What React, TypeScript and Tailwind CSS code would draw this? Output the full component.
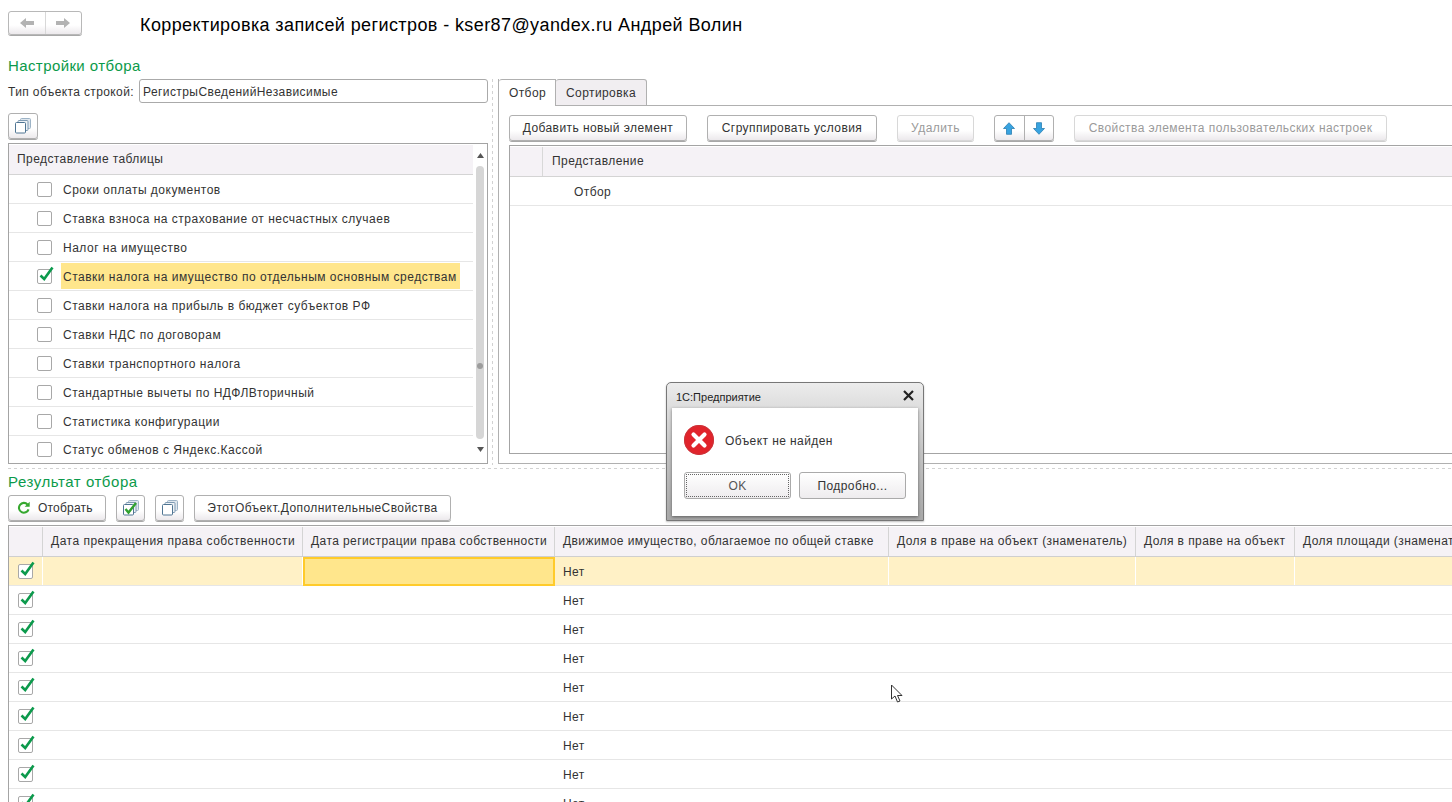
const listRows = [
  "Сроки оплаты документов",
  "Ставка взноса на страхование от несчастных случаев",
  "Налог на имущество",
  "Ставки налога на имущество по отдельным основным средствам",
  "Ставки налога на прибыль в бюджет субъектов РФ",
  "Ставки НДС по договорам",
  "Ставки транспортного налога",
  "Стандартные вычеты по НДФЛВторичный",
  "Статистика конфигурации",
  "Статус обменов с Яндекс.Кассой",
];

const columns = [
  { title: "", width: "w-[34px]" },
  { title: "Дата прекращения права собственности", width: "w-[260px]" },
  { title: "Дата регистрации права собственности", width: "w-[252px]" },
  { title: "Движимое имущество, облагаемое по общей ставке", width: "w-[334px]" },
  { title: "Доля в праве на объект (знаменатель)", width: "w-[247px]" },
  { title: "Доля в праве на объект", width: "w-[159px]" },
  { title: "Доля площади (знаменатель)", width: "w-[200px]" },
];

const dashedH =
  "h-px bg-[repeating-linear-gradient(90deg,#d2d2d2_0,#d2d2d2_3px,transparent_3px,transparent_6px)]";
const buttonBase =
  "flex items-center justify-center rounded-[3px] border bg-gradient-to-b from-white from-60% to-[#ece9ec] shadow-[0_1px_0_#a8a8a8]";
const button = `${buttonBase} border-[#b0b0b0] text-[#333]`;
const buttonOff = `${buttonBase} border-[#d8d8d8] text-[#9a9a9a] shadow-[0_1px_0_#cfcfcf]`;

function Checkbox({ checked }: { checked?: boolean }) {
  return (
    <div className="relative h-[15px] w-[15px] rounded-[2px] border border-[#a8a8a8] bg-white">
      {checked && (
        <svg className="absolute -top-[5px] left-0 h-[18px] w-[17px]" viewBox="0 0 17 18" fill="none">
          <path d="M2.5 10.5 L6.2 14 L14.5 2.5" stroke="#0c9a4c" strokeWidth="2.6" />
        </svg>
      )}
    </div>
  );
}

function StackIcon({ check }: { check?: boolean }) {
  return (
    <svg width="16" height="16" viewBox="0 0 16 16" fill="none">
      <rect x="5.5" y="0.5" width="10" height="10" rx="1" fill="#dfe7ee" stroke="#9db3c6" />
      <rect x="3" y="2.5" width="10" height="10" rx="1" fill="#eef2f6" stroke="#7f9bb3" />
      <rect x="0.5" y="4.5" width="10" height="10.5" rx="1" fill="#fff" stroke="#4f7593" />
      {check && <path d="M2.5 9 L5.5 12.5 L13 3" stroke="#2fa12f" strokeWidth="2.4" />}
    </svg>
  );
}

function BlueArrow({ down }: { down?: boolean }) {
  return (
    <svg width="12" height="13" viewBox="0 0 12 13" className={down ? "rotate-180" : ""}>
      <path d="M6 0.7 L11.5 6.5 H8.5 V12.3 H3.5 V6.5 H0.5 Z" fill="#38a3e0" stroke="#2a7fb2" strokeWidth="0.8" />
    </svg>
  );
}

function GreyArrow({ right }: { right?: boolean }) {
  return (
    <svg width="14" height="10" viewBox="0 0 14 10" className={right ? "rotate-180" : ""}>
      <path d="M0 5 L6 0 V3 H14 V7 H6 V10 Z" fill="#b3b3b3" />
    </svg>
  );
}

function ErrorDialog() {
  return (
    <div className="absolute left-[666px] top-[382px] flex h-[139px] w-[258px] flex-col rounded-t-[5px] border border-[#777] bg-gradient-to-b from-[#ececec] via-[#c4c4c4] to-[#a8a8a8] px-[5px] pb-[4px] shadow-[0_1px_2px_rgba(0,0,0,0.25)]">
      <div className="flex h-[25px] items-center justify-between pl-[4px] pr-[4px] pt-[3px] text-[11px] tracking-[0px] text-[#222]">
        <span>1С:Предприятие</span>
        <svg className="-mt-[3px]" width="11" height="11" viewBox="0 0 11 11">
          <path d="M1 1 L10 10 M10 1 L1 10" stroke="#222" strokeWidth="2.2" />
        </svg>
      </div>
      <div className="flex-1 bg-white pl-[12px] pr-[12px] pt-[17px] shadow-[0_1px_3px_rgba(0,0,0,0.45)]">
        <div className="flex h-[30px] items-center gap-[11px]">
          <svg width="30" height="30" viewBox="0 0 30 30">
            <circle cx="15" cy="15" r="15" fill="#e1232b" />
            <circle cx="15" cy="15" r="14.5" fill="none" stroke="#c8353b" />
            <path d="M9.5 9.5 L20.5 20.5 M20.5 9.5 L9.5 20.5" stroke="#fff" strokeWidth="4.2" strokeLinecap="round" />
          </svg>
          <span className="pt-px">Объект не найден</span>
        </div>
        <div className="mt-[17px] flex gap-[8px]">
          <div className="flex h-[27px] w-[107px] items-center justify-center rounded-[3px] border border-[#aaa] bg-gradient-to-b from-white to-[#eeecee] p-px">
            <div className="flex h-full w-full items-center justify-center border border-dotted border-[#666] text-[#555]">OK</div>
          </div>
          <div className="flex h-[27px] w-[107px] items-center justify-center rounded-[3px] border border-[#aaa] bg-gradient-to-b from-white to-[#eeecee]">
            Подробно...
          </div>
        </div>
      </div>
    </div>
  );
}

export default function App() {
  return (
    <div className="relative h-[802px] w-[1452px] overflow-hidden bg-white font-['Liberation_Sans',Arial,sans-serif] text-[12px] tracking-[0.42px] text-[#333]">
      {/* шапка */}
      <div className="flex h-[50px] items-start pl-[8px] pt-[11px]">
        <div className={`${buttonBase} h-[24px] w-[74px] border-[#b8b8b8]`}>
          <div className="flex h-full flex-1 items-center justify-center border-r border-[#d8d8d8]">
            <GreyArrow />
          </div>
          <div className="flex h-full flex-1 items-center justify-center">
            <GreyArrow right />
          </div>
        </div>
        <h1 className="ml-[58px] flex h-[28px] items-center text-[18px] font-normal tracking-[0.4px] text-black">
          Корректировка записей регистров - kser87@yandex.ru Андрей Волин
        </h1>
      </div>

      <h2 className="ml-[8px] mt-[6px] flex h-[20px] items-center pt-px text-[15px] tracking-[0.4px] text-[#0b9a4a]">
        Настройки отбора
      </h2>

      <div className="mt-[3px] flex h-[386px] pl-[8px]">
        {/* левая колонка */}
        <div className="flex w-[480px] flex-col">
          <div className="flex h-[24px] items-center">
            <span className="w-[131px] pt-px tracking-[0.38px]">Тип объекта строкой:</span>
            <div className="flex h-[24px] flex-1 items-center rounded-[3px] border border-[#aaa] pl-[3px] pt-px">
              РегистрыСведенийНезависимые
            </div>
          </div>
          <div className={`${button} mt-[10px] h-[26px] w-[30px]`}>
            <StackIcon />
          </div>
          <div className="mt-[4px] flex h-[321px] overflow-hidden border border-[#a4a4a4] pt-px">
            <div className="w-[464px]">
              <div className="flex h-[30px] items-center border-b border-[#d4d4d4] bg-[#f5f2f6] pb-[2px] pl-[8px]">
                Представление таблицы
              </div>
              {listRows.map((row, i) => (
                <div
                  key={row}
                  className="flex h-[29px] items-center border-b border-[#e6e6e6] pl-[28px] tracking-[0.5px] last:h-[27px] last:border-b-0"
                >
                  <Checkbox checked={i === 3} />
                  <div className={`ml-[9px] flex h-[26px] items-center pl-[2px] pr-[3px] pt-px ${i === 3 ? "bg-[#ffe68c]" : ""}`}>{row}</div>
                </div>
              ))}
            </div>
            <div className="flex flex-1 flex-col items-center pt-[8px]">
              <svg width="7" height="5" viewBox="0 0 7 5">
                <path d="M3.5 0 L7 5 H0 Z" fill="#555" />
              </svg>
              <div className="relative mt-[8px] h-[273px] w-[8px] rounded-[4px] bg-[#d6d6d6]">
                <div className="absolute left-px top-[197px] h-[6px] w-[6px] rounded-full bg-[#9c9c9c]" />
              </div>
              <svg className="mt-[8px]" width="7" height="5" viewBox="0 0 7 5">
                <path d="M0 0 H7 L3.5 5 Z" fill="#555" />
              </svg>
            </div>
          </div>
        </div>

        {/* сплиттер */}
        <div className="ml-[4px] mr-[5px] w-px bg-[repeating-linear-gradient(180deg,#d2d2d2_0,#d2d2d2_3px,transparent_3px,transparent_6px)]" />

        {/* правая колонка */}
        <div className="flex h-[385px] flex-1 flex-col border-b border-l border-[#b0b0b0]">
          <div className="flex h-[27px]">
            <div className="flex h-[27px] w-[57px] items-center justify-center rounded-tl-[3px] border-r border-t border-[#b0b0b0] pl-px">
              Отбор
            </div>
            <div className="flex h-[27px] w-[91px] items-center justify-center rounded-t-[3px] border-b border-r border-t border-[#b0b0b0] bg-[#f1eef1]">
              Сортировка
            </div>
            <div className="flex-1 border-b border-[#b0b0b0]" />
          </div>
          <div className="mt-[9px] flex h-[26px] gap-[20px] pl-[10px]">
            <div className={`${button} w-[178px]`}>Добавить новый элемент</div>
            <div className={`${button} w-[170px]`}>Сгруппировать условия</div>
            <div className={`${buttonOff} w-[77px]`}>Удалить</div>
            <div className={`${button} w-[60px]`}>
              <div className="flex h-full flex-1 items-center justify-center border-r border-[#b0b0b0]">
                <BlueArrow />
              </div>
              <div className="flex h-full flex-1 items-center justify-center">
                <BlueArrow down />
              </div>
            </div>
            <div className={`${buttonOff} w-[313px]`}>Свойства элемента пользовательских настроек</div>
          </div>
          <div className="ml-[10px] mt-[4px] h-[309px] border-b border-l border-t border-[#a4a4a4] pt-px">
            <div className="flex h-[30px] border-b border-[#d4d4d4] bg-[#f5f2f6]">
              <div className="w-[33px] border-r border-[#d8d8d8]" />
              <div className="flex items-center pb-[2px] pl-[9px]">Представление</div>
            </div>
            <div className="flex h-[29px] items-center border-b border-[#e6e6e6] pl-[64px] pt-px">Отбор</div>
          </div>
        </div>
      </div>

      <div className={`${dashedH} ml-[8px] mt-[3px]`} />

      <h2 className="ml-[8px] mt-[3px] flex h-[20px] items-center text-[15px] tracking-[0.55px] text-[#0b9a4a]">
        Результат отбора
      </h2>

      <div className="ml-[8px] mt-[3px] flex h-[26px] gap-[10px]">
        <div className={`${button} w-[98px] justify-start gap-[7px] pl-[8px] tracking-[0.2px]`}>
          <svg width="14" height="14" viewBox="0 0 16 16" fill="none">
            <path d="M13.2 9.5 A5.6 5.6 0 1 1 12 4" stroke="#36a82f" strokeWidth="2.4" />
            <path d="M14.5 0.8 V6.5 H8.8 Z" fill="#36a82f" />
          </svg>
          <span>Отобрать</span>
        </div>
        <div className={`${button} w-[29px]`}>
          <StackIcon check />
        </div>
        <div className={`${button} w-[29px]`}>
          <StackIcon />
        </div>
        <div className={`${button} w-[257px]`}>ЭтотОбъект.ДополнительныеСвойства</div>
      </div>

      <div className="ml-[8px] mt-[4px] border-l border-t border-[#a4a4a4] pt-px">
        <div className="flex h-[30px] border-b border-[#cfcfcf]">
          {columns.map((col, i) => (
            <div
              key={col.title}
              className={`${col.width} flex shrink-0 items-center overflow-hidden whitespace-nowrap border-r border-[#d4d4d4] bg-[#f5f2f6] pb-[2px] pl-[8px] ${
                i === 1 ? "tracking-[0.5px]" : ""
              }`}
            >
              {col.title}
            </div>
          ))}
        </div>
        <div className="flex h-[29px] items-start border-b border-[#e6e6e6]">
          {columns.map((col, i) => (
            <div
              key={col.title}
              className={`${col.width} flex shrink-0 items-center ${
                i === 2
                  ? "h-[29px] border-2 border-[#ffcb2b] bg-[#ffe68c]"
                  : "h-[28px] border-r border-white bg-[#fff1c6] pl-[8px]"
              }`}
            >
              {i === 0 && (
                <div className="ml-px">
                  <Checkbox checked />
                </div>
              )}
              {i === 3 && <span className="pt-[2px]">Нет</span>}
            </div>
          ))}
        </div>
        {Array.from({ length: 8 }, (_, n) => (
          <div key={n} className="flex h-[29px] items-center border-b border-[#e6e6e6]">
            <div className="ml-[9px] w-[545px]">
              <Checkbox checked />
            </div>
            <span className="pt-[2px]">Нет</span>
          </div>
        ))}
      </div>

      <ErrorDialog />

      {/* курсор мыши */}
      <svg className="absolute left-[890px] top-[684px]" width="16" height="20" viewBox="0 0 16 20">
        <path d="M1.5 1 V15 L5 12 L7.5 18 L10 17 L7.5 11.5 H12 Z" fill="#fff" stroke="#333" strokeWidth="1" />
      </svg>
    </div>
  );
}
